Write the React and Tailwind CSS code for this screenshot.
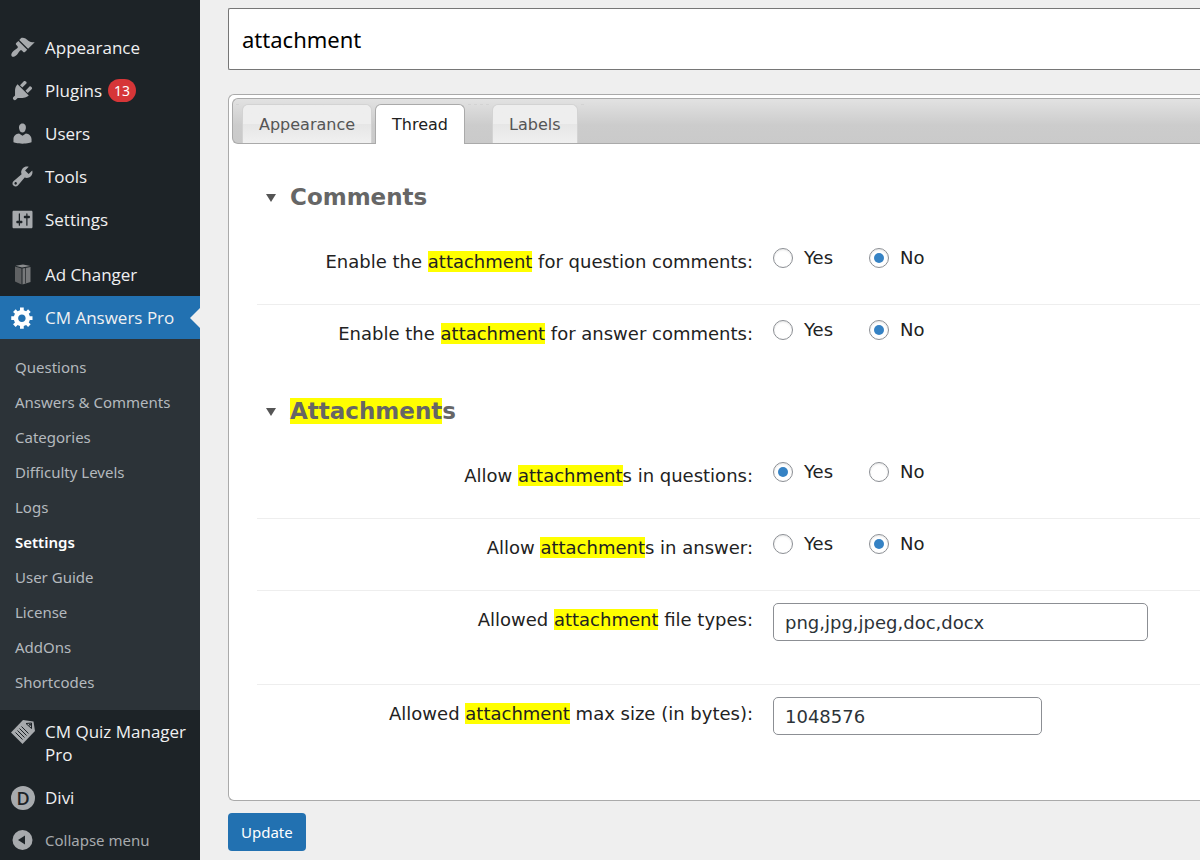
import React, { useState } from "react";

const ICON_PATHS = {
  appearance:
    "M14.48 11.06L7.41 3.99l1.5-1.5c.5-.56 2.3-.47 3.51.32 1.21.8 1.43 1.28 2.91 2.1 1.18.64 2.45 1.26 4.45.85zm-.71.71L6.7 4.7 4.93 6.47c-.39.39-.39 1.02 0 1.41l1.06 1.06c.39.39.39 1.03 0 1.42-.6.6-1.43 1.11-2.21 1.69-.35.26-.7.53-1.01.84C1.43 14.23.4 16.08 1.4 17.07c.99 1 2.84-.03 4.18-1.36.31-.31.58-.66.85-1.02.57-.78 1.08-1.61 1.69-2.21.39-.39 1.02-.39 1.41 0l1.06 1.06c.39.39 1.02.39 1.41 0z",
  plugins:
    "M13.11 4.36L9.87 7.6 8 5.73l3.24-3.24c.35-.34 1.05-.2 1.56.32.52.51.66 1.21.31 1.55zm-8 1.77l.91-1.12 9.01 9.01-1.19.84c-.71.71-2.63 1.16-3.82 1.16H6.14L4.9 17.26c-.59.59-1.54.59-2.12 0-.59-.58-.59-1.53 0-2.12l1.24-1.24v-3.88c0-1.13.4-3.19 1.09-3.89zm7.26 3.97l3.24-3.24c.34-.35 1.04-.21 1.55.31.52.51.66 1.21.31 1.55l-3.24 3.25z",
  users:
    "M10 9.25c-2.27 0-2.73-3.44-2.73-3.44C7 4.02 7.82 2 9.97 2c2.16 0 2.98 2.02 2.71 3.81 0 0-.41 3.44-2.68 3.44zm0 2.57L12.72 10c2.39 0 4.52 2.33 4.52 4.53v2.49s-3.65 1.13-7.24 1.13c-3.65 0-7.24-1.13-7.24-1.13v-2.49c0-2.25 1.94-4.48 4.47-4.48z",
  tools:
    "M16.68 9.77c-1.34 1.34-3.3 1.67-4.95.99l-5.41 6.52c-.99.99-2.59.99-3.58 0s-.99-2.59 0-3.57l6.52-5.42c-.68-1.65-.35-3.61.99-4.95 1.28-1.28 3.12-1.62 4.72-1.06l-2.89 2.89 2.82 2.82 2.86-2.87c.53 1.58.18 3.39-1.08 4.65zM3.81 16.21c.4.39 1.04.39 1.43 0 .4-.4.4-1.04 0-1.43-.39-.4-1.03-.4-1.43 0-.39.39-.39 1.03 0 1.43z",
  settings:
    "M18 16V4c0-.55-.45-1-1-1H3c-.55 0-1 .45-1 1v12c0 .55.45 1 1 1h14c.55 0 1-.45 1-1zM8 11h1c.55 0 1 .45 1 1s-.45 1-1 1H8v1.5c0 .28-.22.5-.5.5s-.5-.22-.5-.5V13H6c-.55 0-1-.45-1-1s.45-1 1-1h1V5.5c0-.28.22-.5.5-.5s.5.22.5.5V11zm5-2h-1c-.55 0-1-.45-1-1s.45-1 1-1h1V5.5c0-.28.22-.5.5-.5s.5.22.5.5V7h1c.55 0 1 .45 1 1s-.45 1-1 1h-1v5.5c0 .28-.22.5-.5.5s-.5-.22-.5-.5V9z",
  gear:
    "M18 12h-2.18c-.17.7-.44 1.35-.81 1.93l1.54 1.54-2.1 2.1-1.54-1.54c-.58.36-1.23.63-1.91.79V19H8v-2.18c-.68-.16-1.33-.43-1.91-.79l-1.54 1.54-2.12-2.12 1.54-1.54c-.36-.58-.63-1.23-.79-1.91H1V9.03h2.17c.16-.7.44-1.35.8-1.94L2.43 5.55l2.1-2.1 1.54 1.54c.58-.37 1.24-.64 1.93-.81V2h3v2.18c.68.16 1.33.43 1.91.79l1.54-1.54 2.12 2.12-1.54 1.54c.36.59.64 1.24.8 1.94H18V12zm-8.5 1.5c1.66 0 3-1.34 3-3s-1.34-3-3-3-3 1.34-3 3 1.34 3 3 3z",
};

const Icon = ({ name }) => (
  <svg viewBox="0 0 20 20" className="size-[25px] fill-current" fillRule="evenodd" aria-hidden="true">
    <path d={ICON_PATHS[name]} />
  </svg>
);

// Dark standing box of the Ad Changer plugin
const BoxIcon = () => (
  <svg viewBox="0 0 25 25" className="size-[25px]" aria-hidden="true">
    <path d="M5 4.5 11.5 6.5V22.5L5 19.5Z" fill="#5f6163" />
    <path d="M12.5 6.5 20.5 5V20L12.5 22.5Z" fill="#77797b" />
    <path d="M5.5 3.7 13 2.5 20.5 4 12 5.5Z" fill="#8a8c8e" />
    <path d="M15.5 6V21.5" stroke="#3a3d40" strokeWidth="1" />
  </svg>
);

// Tilted note sheet of the Quiz Manager plugin
const NotesIcon = () => (
  <svg viewBox="0 0 25 25" className="size-[25px]" aria-hidden="true">
    <path d="M1 13.5 13 1 23.500 2.500 25 12 12.500 25Z" fill="#a7aaad" />
    <path
      d="M5.500 13.500 12.500 20.500M7.500 11.500 14.500 18.500M9.500 9.500 16.500 16.500M11.500 7.500 18.500 14.500"
      stroke="#1d2327"
      strokeWidth="1"
    />
    <path d="M16 4.500 21.500 4 21.500 9.500Z" fill="#a7aaad" stroke="#1d2327" strokeWidth="1" />
    <circle cx="20" cy="5.800" r="1" fill="#1d2327" />
  </svg>
);

const DiviIcon = () => (
  <span
    aria-hidden="true"
    className="ml-px flex size-6 items-center justify-center rounded-full bg-[#a7aaad] font-['Open_Sans',sans-serif] text-lg leading-6 font-semibold text-[#1d2327]"
  >
    D
  </span>
);

const CollapseIcon = () => (
  <svg viewBox="0 0 25 25" className="size-[25px]" aria-hidden="true">
    <circle cx="12.5" cy="12" r="10" fill="#a7aaad" />
    <path d="M15 7.5V16.5L8 12Z" fill="#1d2327" />
  </svg>
);

const topItems = [
  { label: "Appearance", icon: <Icon name="appearance" /> },
  { label: "Plugins", icon: <Icon name="plugins" />, count: 13 },
  { label: "Users", icon: <Icon name="users" /> },
  { label: "Tools", icon: <Icon name="tools" /> },
  { label: "Settings", icon: <Icon name="settings" /> },
];

const subItems = [
  "Questions",
  "Answers & Comments",
  "Categories",
  "Difficulty Levels",
  "Logs",
  "Settings",
  "User Guide",
  "License",
  "AddOns",
  "Shortcodes",
];

const MenuItem = ({ label, icon, count, active }) => (
  <li className={active ? "relative bg-[#2271b1] text-white" : "text-[#a7aaad]"}>
    <a href="#" className="flex items-start py-[10px] pl-[10px]">
      <span className="flex h-[23px] w-[35px] shrink-0 items-center">{icon}</span>
      <span className="font-['Open_Sans','Noto_Sans',sans-serif] text-[17px] leading-[23px] text-[#f0f0f1]">
        {label}
      </span>
      {count && (
        <span className="ml-[6px] rounded-full bg-[#d63638] px-[6px] text-sm leading-[23px] text-white">
          {count}
        </span>
      )}
    </a>
    {active && (
      <span className="absolute top-1/2 right-0 -translate-y-1/2 border-y-10 border-r-10 border-y-transparent border-r-[#efefef]" />
    )}
  </li>
);

const Sidebar = () => (
  <nav
    aria-label="Main menu"
    className="w-[200px] shrink-0 bg-[#1d2327] pt-[26px] font-['Noto_Sans','Open_Sans',sans-serif]"
  >
    <ul>
      {topItems.map((item) => (
        <MenuItem key={item.label} {...item} />
      ))}
    </ul>
    <ul className="mt-3">
      <MenuItem label="Ad Changer" icon={<BoxIcon />} />
      <MenuItem label="CM Answers Pro" icon={<Icon name="gear" />} active />
      <li className="bg-[#2c3338] pt-[11px] pb-[10px]">
        <ul>
          {subItems.map((label) => (
            <li key={label}>
              <a
                href="#"
                className={
                  label === "Settings"
                    ? "block pl-[15px] text-[15px] leading-[35px] font-semibold text-white"
                    : "block pl-[15px] text-[15px] leading-[35px] text-[#b4b9be]"
                }
              >
                {label}
              </a>
            </li>
          ))}
        </ul>
      </li>
      <MenuItem label="CM Quiz Manager Pro" icon={<NotesIcon />} />
      <MenuItem label="Divi" icon={<DiviIcon />} />
      <li>
        <button type="button" className="flex items-center py-[10px] pl-[10px] text-[#a7aaad]">
          <span className="flex h-[23px] w-[35px] shrink-0 items-center">
            <CollapseIcon />
          </span>
          <span className="text-[15px] leading-[23px]">Collapse menu</span>
        </button>
      </li>
    </ul>
  </nav>
);

// Marks every occurrence of the search term in the text
const Highlight = ({ text, term }) => {
  if (!term) return text;
  const escaped = term.replace(/[.*+?^${}()|[\]\\]/g, "\\$&");
  return text.split(new RegExp(`(${escaped})`, "gi")).map((part, i) =>
    part.toLowerCase() === term.toLowerCase() ? (
      <mark key={i} className="bg-[#ffff00] text-inherit">
        {part}
      </mark>
    ) : (
      part
    )
  );
};

const TabStub = () => <span className="mr-[3px] h-px w-[3px] shrink-0 bg-[#d3d3d3]" />;

const Tab = ({ label, selected, onClick }) => (
  <button
    type="button"
    role="tab"
    aria-selected={selected}
    onClick={onClick}
    className={
      selected
        ? "-mb-px mr-[3px] h-10 rounded-t-md border border-b-0 border-[#aaaaaa] bg-white px-4 text-base text-[#212121]"
        : "mr-[3px] h-[39px] rounded-t-md border border-b-0 border-[#d3d3d3] bg-linear-to-b from-[#eeeeee] from-50% via-[#e6e6e6] via-50% to-[#f0f0f0] px-4 pt-px text-base text-[#555555]"
    }
  >
    {label}
  </button>
);

const Section = ({ title, term, children }) => (
  <section className="mb-[21px] last:mb-0">
    <h2 className="mb-[22px] flex items-center text-[23px] leading-7 font-bold text-[#666666]">
      <svg viewBox="0 0 10 10" className="mr-[14px] ml-[9px] size-[10px] fill-[#555555]" aria-hidden="true">
        <path d="M0 2H10L5 10Z" />
      </svg>
      <span>
        <Highlight text={title} term={term} />
      </span>
    </h2>
    <div className="divide-y divide-[#eeeeee]">{children}</div>
  </section>
);

const Row = ({ children }) => (
  <div className="grid grid-cols-[minmax(0,496px)_minmax(0,1fr)] items-start gap-x-5">{children}</div>
);

const RadioRow = ({ name, label, value, term }) => (
  <Row>
    <span id={`${name}-label`} className="pt-[17px] text-right leading-6">
      <Highlight text={label} term={term} />
    </span>
    <div role="radiogroup" aria-labelledby={`${name}-label`} className="flex gap-9 pt-[13px] pb-[34px] leading-6">
      {["Yes", "No"].map((option) => (
        <label key={option} className="flex items-center gap-[11px]">
          <input
            type="radio"
            name={name}
            defaultChecked={option === value}
            className="grid size-5 appearance-none place-content-center rounded-full border border-[#8c8f94] bg-white shadow-[inset_0_1px_2px_rgba(0,0,0,0.1)] before:size-[10px] before:rounded-full checked:before:bg-[#3582c4]"
          />
          {option}
        </label>
      ))}
    </div>
  </Row>
);

const TextRow = ({ name, label, value, width, term }) => (
  <Row>
    <label htmlFor={name} className="pt-[17px] text-right leading-6">
      <Highlight text={label} term={term} />
    </label>
    <div className="flex pt-3 pb-[43px]">
      <input
        id={name}
        type="text"
        defaultValue={value}
        className={`${width} h-[38px] max-w-full rounded-[5px] border border-[#8c8f94] bg-white px-[11px] text-[#2c3338]`}
      />
    </div>
  </Row>
);

const App = () => {
  const [term, setTerm] = useState("attachment");
  const [tab, setTab] = useState("Thread");

  const renderTab = (label) => (
    <Tab label={label} selected={tab === label} onClick={() => setTab(label)} />
  );

  return (
    <div className="flex min-h-screen bg-[#efefef]">
      <Sidebar />
      <main className="min-w-0 flex-1 pt-2 pb-2 pl-7 font-['DejaVu_Sans',Verdana,sans-serif] text-[18px] text-[#222222]">
        <input
          type="text"
          aria-label="Search settings"
          value={term}
          onChange={(e) => setTerm(e.target.value)}
          className="block h-[62px] w-full rounded-l-xs border border-r-0 border-[#767676] bg-white px-[13px] font-['Noto_Sans','Open_Sans',sans-serif] text-[22px] text-black"
        />

        <div className="mt-6 rounded-l-md border border-r-0 border-[#aaaaaa] bg-white pt-[3px] pb-[22px] pl-[3px]">
          <div
            role="tablist"
            className="flex h-[46px] items-start rounded-l-md border border-r-0 border-[#aaaaaa] bg-linear-to-b from-[#e2e2e2] via-[#cccccc] via-60% to-[#cacaca] pt-[5px] pl-[3px]"
          >
            <TabStub />
            {renderTab("Appearance")}
            {renderTab("Thread")}
            <TabStub />
            <TabStub />
            <TabStub />
            <TabStub />
            {renderTab("Labels")}
            <TabStub />
          </div>

          <div className="pt-[39px] pl-[25px]">
            <Section title="Comments" term={term}>
              <RadioRow
                name="question-comments"
                label="Enable the attachment for question comments:"
                value="No"
                term={term}
              />
              <RadioRow
                name="answer-comments"
                label="Enable the attachment for answer comments:"
                value="No"
                term={term}
              />
            </Section>
            <Section title="Attachments" term={term}>
              <RadioRow name="in-questions" label="Allow attachments in questions:" value="Yes" term={term} />
              <RadioRow name="in-answer" label="Allow attachments in answer:" value="No" term={term} />
              <TextRow
                name="file-types"
                label="Allowed attachment file types:"
                value="png,jpg,jpeg,doc,docx"
                width="w-[375px]"
                term={term}
              />
              <TextRow
                name="max-size"
                label="Allowed attachment max size (in bytes):"
                value="1048576"
                width="w-[269px]"
                term={term}
              />
            </Section>
          </div>
        </div>

        <button
          type="button"
          className="mt-3 h-[38px] rounded bg-[#2271b1] px-[13px] font-['Noto_Sans','Open_Sans',sans-serif] text-[15px] text-white"
        >
          Update
        </button>
      </main>
    </div>
  );
};

export default App;
